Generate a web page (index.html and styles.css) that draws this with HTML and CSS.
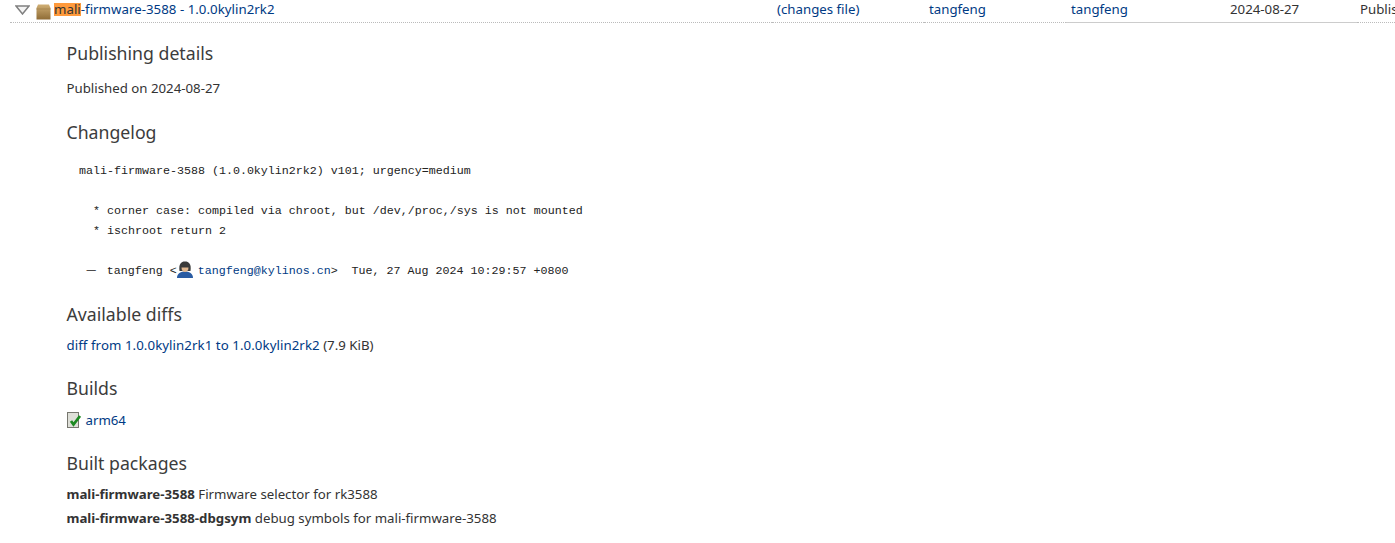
FILE: index.html
```html
<!DOCTYPE html>
<html lang="en">
<head>
<meta charset="utf-8">
<title>mali-firmware-3588</title>
<link rel="stylesheet" href="styles.css">
</head>
<body>
<div class="row">
  <div class="cell c-name">
    <svg class="arrow" width="15" height="10" viewBox="0 0 15 10"><path d="M1 1h13L7.500 9z" fill="#f4f4f4" stroke="#808080" stroke-width="1.5"/></svg>
    <svg class="pkg" width="15" height="16" viewBox="0 0 15 16"><defs><linearGradient id="b" x1="0" y1="0" x2="0" y2="1"><stop offset="0" stop-color="#cfae74"/><stop offset="1" stop-color="#8f6c36"/></linearGradient></defs><path d="M2 .5h11l1.500 3.500v11.500H.5V4z" fill="url(#b)"/><path d="M.5 5h14" stroke="#a88650" fill="none"/></svg>
    <a href="#" class="name-link"><mark class="hl">mali</mark>-firmware-3588 - 1.0.0kylin2rk2</a>
  </div>
  <div class="cell c-file"><a href="#">(changes file)</a></div>
  <div class="cell c-a"><a href="#">tangfeng</a></div>
  <div class="cell c-b"><a href="#">tangfeng</a></div>
  <div class="cell c-date">2024-08-27</div>
  <div class="cell c-status">Published</div>
</div>
<main class="details">
  <h2 class="first">Publishing details</h2>
  <p>Published on 2024-08-27</p>
  <h2 class="log-h">Changelog</h2>
  <pre class="changelog">mali-firmware-3588 (1.0.0kylin2rk2) v101; urgency=medium

  * corner case: compiled via chroot, but /dev,/proc,/sys is not mounted
  * ischroot return 2

 <span class="dash">—</span> tangfeng &lt;<svg class="person" width="16" height="17" viewBox="0 0 16 17"><path d="M0 17c0-4 3-6.500 8-6.500s8 2.500 8 6.500z" fill="#2a5ca3"/><path d="M2.500 10C1.500 3 4 .5 8 .5s6.500 2.500 5.500 9.500z" fill="#3a3a3a"/><path d="M4.500 6.500h7c0 2.800-1.300 4.500-3.500 4.500s-3.500-1.700-3.500-4.500z" fill="#e0b68e"/></svg> <a href="#" class="mail">tangfeng@kylinos.cn</a>&gt;  Tue, 27 Aug 2024 10:29:57 +0800</pre>
  <h2 class="diff-h">Available diffs</h2>
  <p><a href="#" class="diff-link">diff from 1.0.0kylin2rk1 to 1.0.0kylin2rk2</a> (7.9 KiB)</p>
  <h2 class="builds-h">Builds</h2>
  <p class="build"><svg class="check" width="15" height="16" viewBox="0 0 15 16"><rect x=".5" y=".5" width="11" height="15" fill="#dedfd8" stroke="#77776f"/><path d="M4 9l2.500 3.500L13 4" fill="none" stroke="#1d8a22" stroke-width="2.800"/></svg><a href="#">arm64</a></p>
  <h2 class="pkg-h">Built packages</h2>
  <ul class="packages">
    <li><b>mali-firmware-3588</b> Firmware selector for rk3588</li>
    <li><b>mali-firmware-3588-dbgsym</b> debug symbols for mali-firmware-3588</li>
  </ul>
</main>
</body>
</html>
```
FILE: styles.css
```css
html, body {
  margin: 0;
  padding: 0;
  background: #fff;
  overflow: hidden;
}
body {
  font-family: "Noto Sans", "Open Sans", sans-serif;
  font-size: 13.25px;
  color: #333;
  line-height: 18px;
}
a {
  color: #003a84;
  text-decoration: none;
}
.row {
  display: grid;
  grid-template-columns: 762px 152px 142px 159px 132px 1fr;
  height: 23px;
  margin-left: 10px;
  white-space: nowrap;
  overflow: hidden;
}
.cell {
  line-height: 18px;
  padding-left: 5px;
  border-bottom: 1px dotted #bbb;
}
.c-b,
.c-date {
  border-bottom: 1px solid #ccc;
}
.c-status {
  padding-left: 3px;
}
.c-name {
  display: flex;
  align-items: flex-start;
  padding-left: 0;
}
.arrow {
  margin: 5px 0 0 5px;
}
.pkg {
  margin: 4px 3px 0 6px;
}
.name-link {
  letter-spacing: 0.03px;
}
.hl {
  display: inline-block;
  line-height: 13px;
  background: #ff9a3c;
  color: #333;
}
.details {
  padding-left: 66.5px;
}
h2 {
  margin: 0;
  font-weight: 400;
  font-size: 17.7px;
  line-height: 22px;
  color: #3c3c3c;
}
p {
  margin: 0;
}
.first { margin-top: 19px; }
.first + p { margin-top: 15px; }
.log-h { margin-top: 24px; }
.changelog {
  margin: 18px 0 0 12.5px;
  font-family: "Liberation Mono", monospace;
  font-size: 11.67px;
  line-height: 20px;
  color: #222;
}
.dash {
  font-family: "Noto Sans CJK SC", sans-serif;
  letter-spacing: 3.33px;
  line-height: 0;
}
.person {
  vertical-align: -4px;
  margin: 0 -2px 0 0;
}
.diff-h { margin-top: 22px; }
.diff-h + p { margin-top: 11px; }
.diff-link {
  letter-spacing: 0.07px;
}
.builds-h { margin-top: 23px; }
.build {
  margin-top: 12px;
  display: flex;
  align-items: center;
  gap: 4px;
}
.pkg-h { margin-top: 23px; }
.packages {
  list-style: none;
  margin: 8px 0 0;
  padding: 0;
}
.packages li {
  line-height: 24px;
}
```
